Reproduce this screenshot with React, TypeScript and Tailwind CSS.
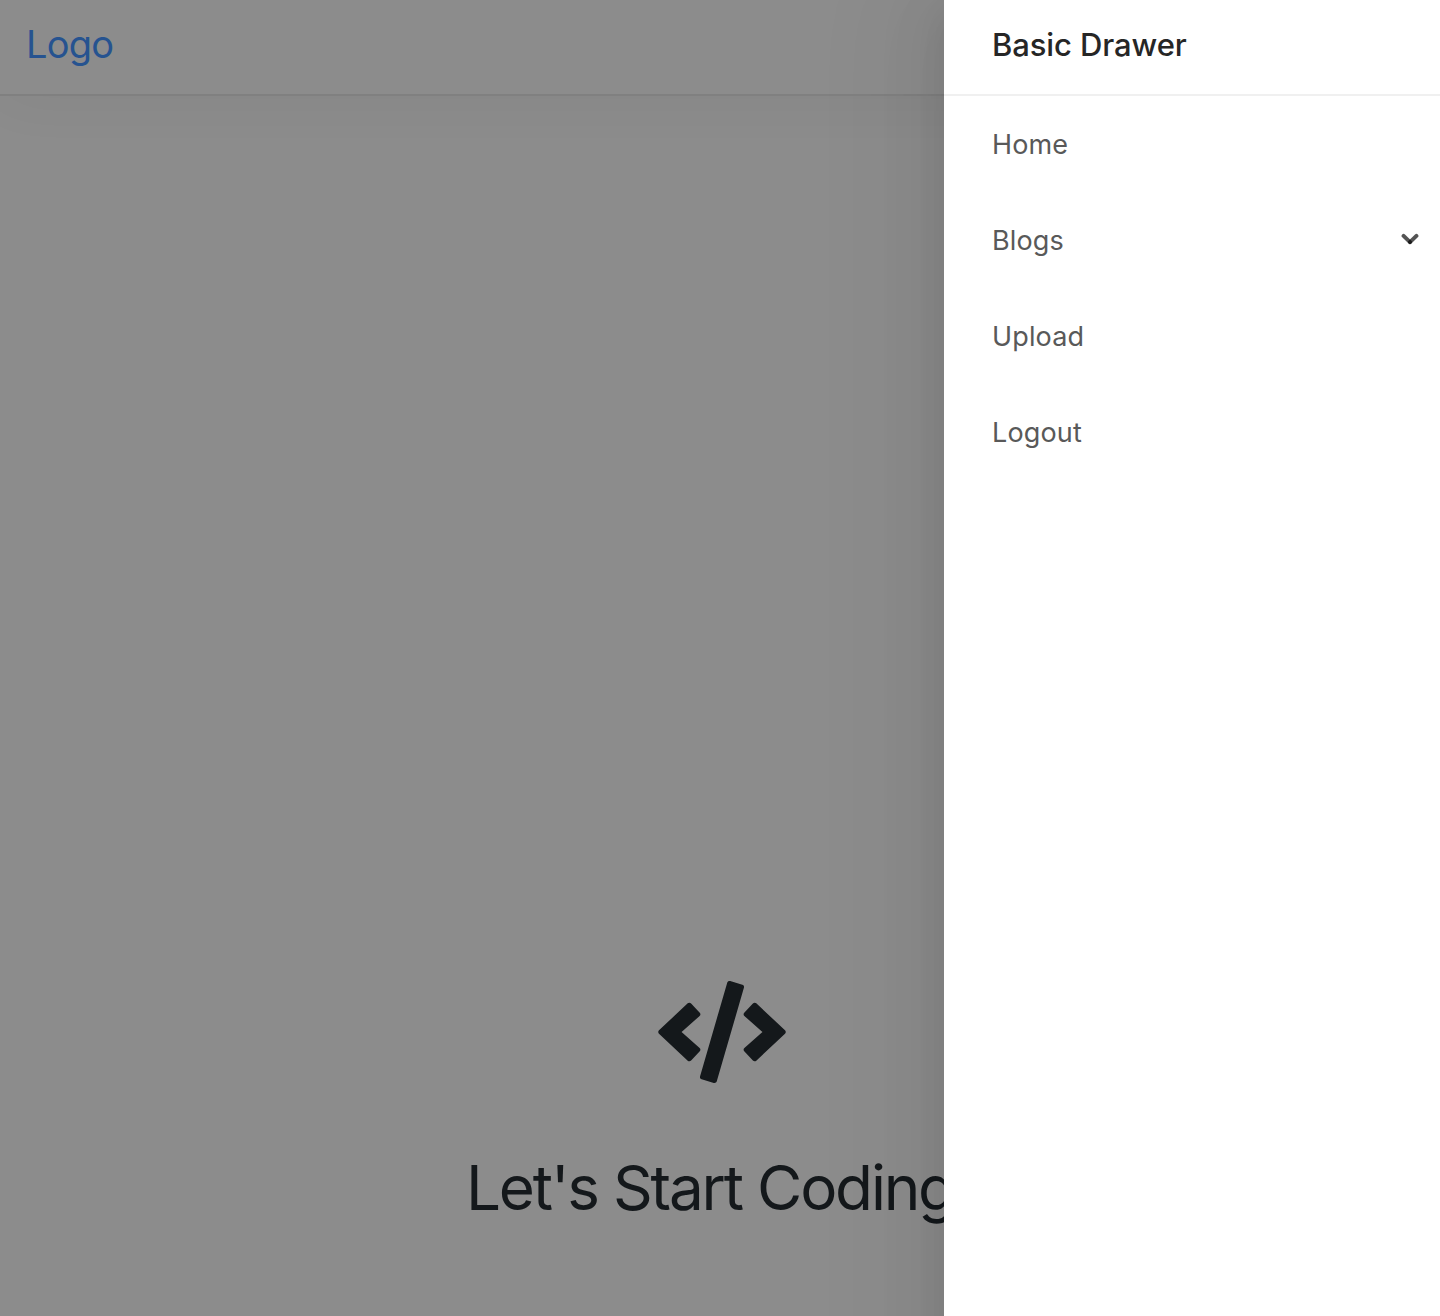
import { FaCode } from "react-icons/fa";

const items = ["Home", "Blogs", "Upload", "Logout"];

// Two translucent bars that overlap at the tip
function Chevron() {
  return (
    <svg className="-mt-1" width="18" height="12" viewBox="0 0 18 12" fill="none" stroke="#000" strokeOpacity="0.67" strokeWidth="4" strokeLinecap="round">
      <path d="M2.6 2.9 L9 9.1" />
      <path d="M15.4 2.9 L9 9.1" />
    </svg>
  );
}

export default function App() {
  return (
    <div className="flex h-[1316px] w-[1440px] items-start overflow-hidden bg-[#8c8c8c] font-[Inter,sans-serif]">
      <div className="flex w-[944px] shrink-0 flex-col">
        <header className="h-24 w-[1440px] shrink-0 border-b-2 border-[#808080] pl-[26px] shadow-[0_0_60px_rgba(0,0,0,0.05)]">
          <a className="block text-[38px] leading-[89px] tracking-[-0.75px] text-[#265390]">Logo</a>
        </header>
        <main className="flex flex-1 flex-col pl-[466px] text-[#14181b]">
          <FaCode className="mt-[885px] ml-[192px] h-[102px] w-32 shrink-0" />
          <h1 className="mt-[60px] text-[62px] leading-[90px] tracking-[-2.2px] whitespace-nowrap">Let's Start Coding</h1>
        </main>
      </div>
      <aside className="relative z-10 h-[1440px] w-[496px] shrink-0 bg-white shadow-[-12px_0_32px_-16px_rgba(0,0,0,0.08),-18px_0_56px_rgba(0,0,0,0.05),-24px_0_96px_32px_rgba(0,0,0,0.03)]">
        <h2 className="h-24 border-b-2 border-[#f0f0f0] pl-12 text-[31px] leading-[89px] font-medium tracking-[-0.1px] text-[#262626]">Basic Drawer</h2>
        <ul>
          {items.map((item) => (
            <li key={item} className="flex h-24 items-center justify-between pt-[2px] pr-[21px] pl-12 text-[27px] leading-10 tracking-[0.15px] text-[#595959]">
              <span>{item}</span>
              {item === "Blogs" && <Chevron />}
            </li>
          ))}
        </ul>
      </aside>
    </div>
  );
}
